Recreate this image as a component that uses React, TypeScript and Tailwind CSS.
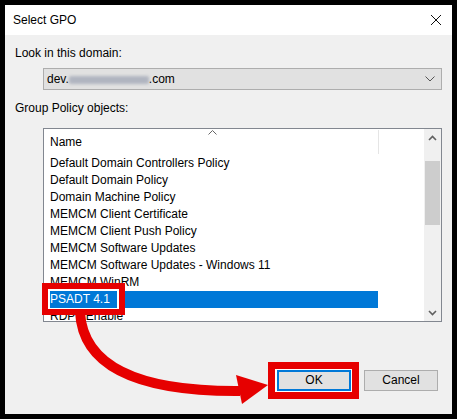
import React from "react";

const rows = [
  "Default Domain Controllers Policy",
  "Default Domain Policy",
  "Domain Machine Policy",
  "MEMCM Client Certificate",
  "MEMCM Client Push Policy",
  "MEMCM Software Updates",
  "MEMCM Software Updates - Windows 11",
  "MEMCM WinRM",
  "PSADT 4.1",
  "RDP - Enable",
];

export default function App() {
  return (
    <div
      className="relative w-[457px] h-[419px] bg-black p-[5px] overflow-hidden text-[12px] text-black"
      style={{ fontFamily: '"Liberation Sans", Arial, sans-serif' }}
    >
      <div className="w-[447px] h-[409px] bg-[#f0f0f0] flex flex-col">
        {/* Title bar */}
        <div className="h-[30px] bg-white flex items-center justify-between pl-[8px] pr-[10px] shrink-0">
          <span className="leading-[15px]">Select GPO</span>
          <svg width="12" height="12" viewBox="0 0 12 12">
            <path d="M1 1 L11 11 M11 1 L1 11" stroke="#111" strokeWidth="1" fill="none" />
          </svg>
        </div>
        {/* Body */}
        <div className="flex flex-col pl-[10px] pr-[10px] pt-[11px]">
          <div className="h-[15px] leading-[15px]">Look in this domain:</div>
          <div className="mt-[7px] ml-[28px] h-[22px] border border-[#adadad] bg-[#e1e1e1] flex items-center justify-between pl-[3px] pr-[6px]">
            <span className="flex items-center leading-[15px]">
              dev.
              <span className="inline-block w-[80px] h-[8px] mt-[2px] bg-[#b0b5c0] blur-[1.5px] rounded-[2px]" />
              .com
            </span>
            <svg width="10" height="6" viewBox="0 0 10 6">
              <path d="M0.5 0.5 L5 5 L9.5 0.5" stroke="#555" strokeWidth="1" fill="none" />
            </svg>
          </div>
          <div className="mt-[11px] h-[15px] leading-[15px]">Group Policy objects:</div>
          <div className="mt-[12px] ml-[28px] h-[194px] border border-[#828790] bg-white flex overflow-hidden">
            <div className="flex-1 flex flex-col">
              <div className="h-[26px] shrink-0 relative flex items-center pl-[6px]">
                <span className="leading-[15px] mt-[1px]">Name</span>
                <svg className="absolute left-[164px] top-[1px]" width="9" height="5" viewBox="0 0 9 5">
                  <path d="M0.5 4.5 L4.5 0.5 L8.5 4.5" stroke="#666" strokeWidth="1" fill="none" />
                </svg>
                <div className="absolute left-[334px] top-[1px] w-px h-[24px] bg-[#e5e5e5]" />
              </div>
              {rows.map((r) => {
                const sel = r === "PSADT 4.1";
                return (
                  <div
                    key={r}
                    className={
                      sel
                        ? "ml-[1px] w-[333px] h-[17px] shrink-0 flex items-center pl-[5px] bg-[#0078d7] text-white"
                        : "ml-[1px] w-[333px] h-[17px] shrink-0 flex items-center pl-[5px]"
                    }
                  >
                    <span className="leading-[15px] whitespace-nowrap">{r}</span>
                  </div>
                );
              })}
            </div>
            <div className="w-[17px] bg-[#f0f0f0] flex flex-col items-center px-[1px] shrink-0">
              <div className="h-[17px] w-full flex items-center justify-center">
                <svg width="9" height="6" viewBox="0 0 9 6">
                  <path d="M1 5 L4.5 1.5 L8 5" stroke="#606060" strokeWidth="1.6" fill="none" />
                </svg>
              </div>
              <div className="mt-[15px] w-full h-[64px] bg-[#cdcdcd]" />
              <div className="flex-1" />
              <div className="h-[17px] w-full flex items-center justify-center">
                <svg width="9" height="6" viewBox="0 0 9 6">
                  <path d="M1 1 L4.5 4.5 L8 1" stroke="#606060" strokeWidth="1.6" fill="none" />
                </svg>
              </div>
            </div>
          </div>
          <div className="mt-[48px] flex justify-end gap-[13px] pr-[4px]">
            <button className="w-[74px] h-[21px] border-2 border-[#0078d7] bg-[#e1e1e1] flex items-center justify-center leading-[15px]">
              OK
            </button>
            <button className="w-[74px] h-[21px] border border-[#adadad] bg-[#e1e1e1] flex items-center justify-center leading-[15px]">
              Cancel
            </button>
          </div>
        </div>
      </div>
      {/* Annotation overlay */}
      <svg className="absolute left-0 top-0 pointer-events-none" width="457" height="419" viewBox="0 0 457 419">
        <rect x="49" y="290" width="69" height="19" fill="none" stroke="#fff" strokeWidth="2" />
        <rect x="45" y="286" width="77" height="26" fill="none" stroke="#e60000" strokeWidth="6" />
        <path d="M80 312 C82 350 110 392 240 391" fill="none" stroke="#e60000" strokeWidth="10" />
        <polygon points="236,375 268,385 242,404" fill="#e60000" />
        <rect x="276" y="369" width="76" height="23" fill="none" stroke="#fff" strokeWidth="2" />
        <rect x="271.5" y="365.5" width="84" height="30" fill="none" stroke="#e60000" strokeWidth="7" />
      </svg>
    </div>
  );
}
